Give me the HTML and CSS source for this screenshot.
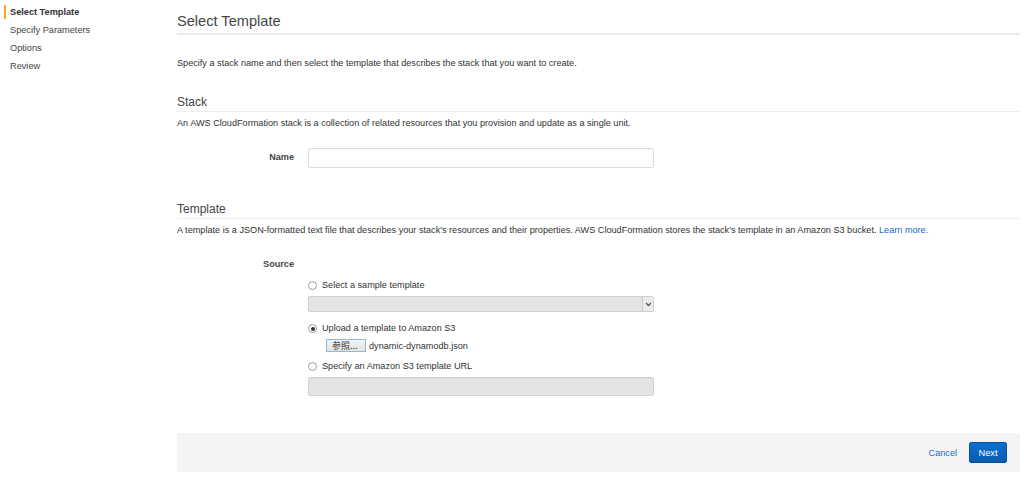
FILE: index.html
```html
<!DOCTYPE html>
<html>
<head>
<meta charset="utf-8">
<link rel="stylesheet" href="styles.css">
</head>
<body>
<div class="page">
  <nav class="steps">
    <div class="step active">Select Template</div>
    <div class="step">Specify Parameters</div>
    <div class="step">Options</div>
    <div class="step">Review</div>
  </nav>
  <main class="main">
    <h1 class="title">Select Template</h1>
    <p class="intro">Specify a stack name and then select the template that describes the stack that you want to create.</p>

    <section class="section stack">
      <h2 class="section-title">Stack</h2>
      <p class="section-desc">An AWS CloudFormation stack is a collection of related resources that you provision and update as a single unit.</p>
      <div class="field name-field">
        <label class="field-label">Name</label>
        <div class="field-control"><input class="text-input" type="text"></div>
      </div>
    </section>

    <section class="section template">
      <h2 class="section-title">Template</h2>
      <p class="section-desc">A template is a JSON-formatted text file that describes your stack's resources and their properties. AWS CloudFormation stores the stack's template in an Amazon S3 bucket. <a class="link">Learn more.</a></p>
      <div class="field source-field">
        <label class="field-label">Source</label>
        <div class="field-control options">
          <div class="radio-row"><span class="radio"></span><span>Select a sample template</span></div>
          <div class="select disabled"><span class="select-arrow"><svg width="7" height="5" viewBox="0 0 7 5"><path d="M1 1 L3.5 3.5 L6 1" fill="none" stroke="#555" stroke-width="1.3"/></svg></span></div>
          <div class="radio-row"><span class="radio checked"></span><span>Upload a template to Amazon S3</span></div>
          <div class="file-row"><span class="file-btn">参照...</span><span class="file-name">dynamic-dynamodb.json</span></div>
          <div class="radio-row"><span class="radio"></span><span>Specify an Amazon S3 template URL</span></div>
          <div class="text-input disabled url-input"></div>
        </div>
      </div>
    </section>

    <footer class="actions">
      <a class="cancel">Cancel</a>
      <button class="next">Next</button>
    </footer>
  </main>
</div>
</body>
</html>
```
FILE: styles.css
```css
* { box-sizing: border-box; }
html, body { margin: 0; padding: 0; background: #fff; }
body {
  font-family: "Liberation Sans", Arial, sans-serif;
  font-size: 9.15px;
  color: #333;
}
.page { display: flex; width: 1024px; }
.steps { width: 177px; padding-top: 5px; }
.step {
  height: 18px;
  line-height: 15px;
  padding-left: 10px;
  color: #444;
  font-size: 9.2px;
  position: relative;
}
.step.active { font-weight: bold; color: #333; }
.step.active::before {
  content: "";
  position: absolute;
  left: 4px; top: 0; width: 2px; height: 14px;
  background: #f5a623;
}
.main { width: 843px; }
.title {
  margin: 0;
  padding-top: 11px;
  padding-bottom: 2px;
  font-size: 14.6px;
  line-height: 20px;
  font-weight: normal;
  color: #444;
  border-bottom: 2px solid #eaeaea;
}
.intro { margin: 22px 0 0; line-height: 12px; }
.section-title {
  margin: 0;
  font-size: 12px;
  line-height: 16px;
  font-weight: normal;
  color: #444;
  padding-bottom: 1px;
  border-bottom: 1px solid #eee;
}
.stack .section-title { margin-top: 25px; }
.template .section-title { margin-top: 33px; }
.section-desc { margin: 5px 0 0; line-height: 12px; }
.link { color: #1a6dbf; text-decoration: none; }
.field { display: grid; grid-template-columns: 117px 346px; column-gap: 14px; }
.field-label { text-align: right; font-weight: bold; color: #444; line-height: 19px; }
.name-field { margin-top: 19px; }
.source-field { margin-top: 19px; }
.text-input {
  display: block;
  width: 346px; height: 20px;
  border: 1px solid #ddd;
  border-radius: 2px;
  background: #fff;
  margin: 0; padding: 0;
  box-shadow: inset 0 1px 1px rgba(0,0,0,0.04);
}
.text-input.disabled { background: #e4e4e4; border-color: #d3d3d3; }
.options { padding-top: 24px; }
.radio-row { display: flex; align-items: center; height: 13px; line-height: 13px; color: #333; }
.radio {
  width: 9px; height: 9px;
  border: 1px solid #9a9a9a;
  border-radius: 50%;
  margin: 0 5px 0 0;
  background: #fff;
  position: relative;
  flex: none;
}
.radio.checked::after {
  content: ""; position: absolute; left: 1.5px; top: 1.5px;
  width: 4px; height: 4px; border-radius: 50%; background: #333;
}
.select {
  margin-top: 4px;
  height: 16px;
  background: #e4e4e4;
  border: 1px solid #cfcfcf;
  border-radius: 2px;
  position: relative;
}
.select-arrow {
  position: absolute; right: 0; top: 0; bottom: 0; width: 11px;
  border-left: 1px solid #cfcfcf;
  background: #ececec;
  display: flex; align-items: center; justify-content: center;
}
.select + .radio-row { margin-top: 10px; }
.file-row { display: flex; align-items: center; margin-top: 4px; padding-left: 18px; height: 13px; }
.file-btn {
  display: inline-block;
  width: 40px; height: 13px; line-height: 11px;
  border: 1px solid #8fb6e0;
  background: linear-gradient(#f4f4f4, #e3e3e3);
  font-family: "Noto Sans CJK JP", "Liberation Sans", sans-serif;
  font-size: 9px;
  color: #333;
  padding-left: 5px;
}
.file-name { margin-left: 3px; color: #333; }
.file-row + .radio-row { margin-top: 8px; }
.url-input { margin-top: 4px; height: 19px; }
.actions {
  margin-top: 37px;
  height: 39px;
  background: #f4f4f4;
  display: flex; align-items: center; justify-content: flex-end;
  padding-right: 13px;
}
.cancel { color: #1a6dbf; margin-right: 12px; }
.next {
  width: 38px; height: 21px;
  background: linear-gradient(#0f6fcf, #0a5bb0);
  border: 1px solid #0a4f9a;
  border-radius: 2px;
  color: #fff;
  font-family: "Liberation Sans", Arial, sans-serif;
  font-size: 9.3px;
  padding: 0;
}
```
